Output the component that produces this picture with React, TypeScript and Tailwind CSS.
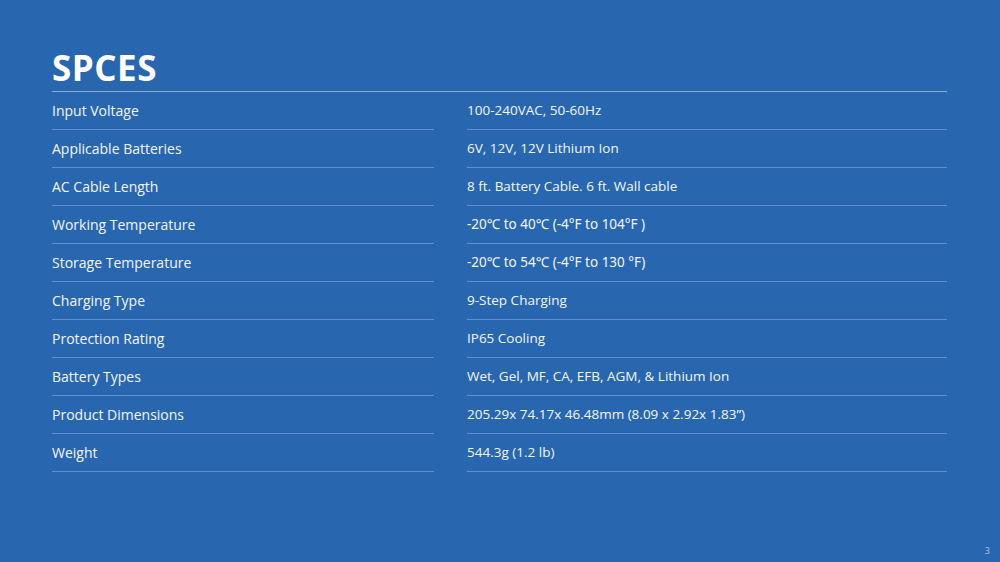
import React from "react";

type Spec = { label: string; value: string; alt?: boolean };

const specs: Spec[] = [
    { label: "Input Voltage", value: "100-240VAC, 50-60Hz" },
    { label: "Applicable Batteries", value: "6V, 12V, 12V Lithium Ion" },
    { label: "AC Cable Length", value: "8 ft. Battery Cable. 6 ft. Wall cable" },
    { label: "Working Temperature", value: "-20℃ to 40℃ (-4°F to 104°F )", alt: true },
    { label: "Storage Temperature", value: "-20℃ to 54℃ (-4°F to 130 °F)", alt: true },
    { label: "Charging Type", value: "9-Step Charging" },
    { label: "Protection Rating", value: "IP65 Cooling" },
    { label: "Battery Types", value: "Wet, Gel, MF, CA, EFB, AGM, & Lithium Ion" },
    { label: "Product Dimensions", value: "205.29x 74.17x 46.48mm (8.09  x 2.92x 1.83”)" },
    { label: "Weight", value: "544.3g (1.2 lb)" },
];

const App: React.FC = () => {
    return (
        <div className="w-[1000px] h-[562px] bg-[#2966b0] relative overflow-hidden text-[#f3f6fb] font-['Open_Sans',sans-serif]">
            <div className="pl-[52px] pr-[53px] pt-[51px]">
                <h1 className="text-[35px] leading-[34px] font-bold text-white tracking-[0.5px] mb-[6px]">SPCES</h1>
                <div className="border-t border-[#86a9dc]" />

                {/* spec rows */}
                <div className="grid grid-cols-[382px_480px] gap-x-[33px]">
                    {specs.map((item) => (
                        <React.Fragment key={item.label}>
                            <div className="h-[38px] flex items-center border-b border-[#5f8fd2] text-[14px] font-medium">
                                {item.label}
                            </div>
                            <div
                                className={
                                    item.alt
                                        ? "h-[38px] flex items-center border-b border-[#5f8fd2] text-[13.5px] font-['Noto_Sans',sans-serif]"
                                        : "h-[38px] flex items-center border-b border-[#5f8fd2] text-[13.5px]"
                                }
                            >
                                {item.value}
                            </div>
                        </React.Fragment>
                    ))}
                </div>
            </div>
            <div className="absolute right-[10px] bottom-[5px] text-[9px] text-[#a9c3e8]">3</div>
        </div>
    );
};

export default App;
